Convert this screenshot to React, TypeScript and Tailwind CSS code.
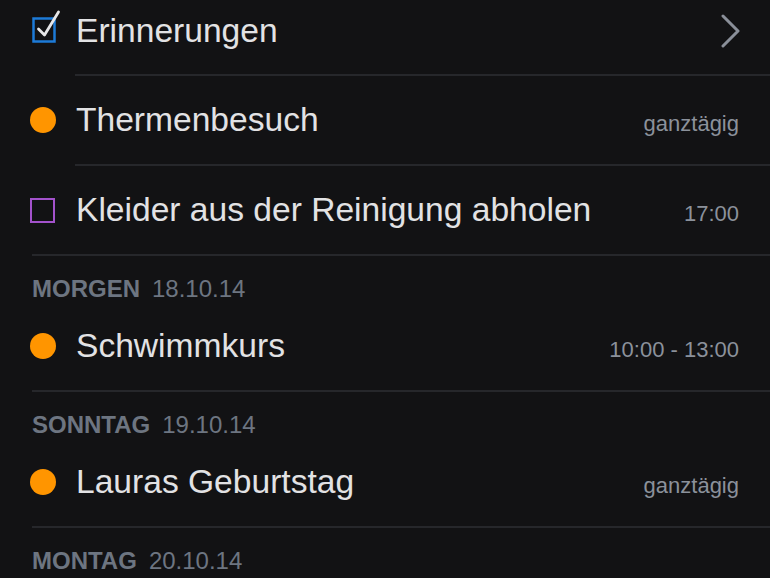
export default function App() {
  const font = { fontFamily: '"Liberation Sans", Arial, sans-serif' }

  const Dot = () => (
    <div className="w-[26px] flex justify-center">
      <div className="w-[26px] h-[26px] rounded-full bg-[#ff9500]" />
    </div>
  )

  const Separator = ({ inset }: { inset?: boolean }) => (
    <div className={inset ? "h-[2px] ml-[75px] bg-[#26272b]" : "h-[2px] ml-[32px] bg-[#26272b]"} />
  )

  const Header = ({ day, date }: { day: string; date: string }) => (
    <div className="h-[46px] flex items-end pl-[32px] text-[24px] leading-[26px] text-[#6d7581]">
      <span className="font-bold">{day}</span>
      <span className="ml-[12px]">{date}</span>
    </div>
  )

  const Row = ({
    icon,
    title,
    right,
    className = "h-[88px]",
  }: {
    icon: React.ReactNode
    title: string
    right?: React.ReactNode
    className?: string
  }) => (
    <div className={`flex items-center pl-[29px] pr-[31px] ${className}`}>
      <div className="w-[27px] flex justify-center">{icon}</div>
      <div className="ml-[20px] flex-1 text-[33.6px] leading-[38px] text-[#e2e2e4]">{title}</div>
      {right}
    </div>
  )

  const Time = ({ children }: { children: React.ReactNode }) => (
    <div className="text-[22px] leading-[26px] text-[#8b919b] mt-[8px]">{children}</div>
  )

  return (
    <div className="w-[770px] h-[578px] overflow-hidden bg-[#121214]" style={font}>
      <Row
        className="h-[74px] pb-[12px]"
        icon={
          <svg width="30" height="34" viewBox="0 0 30 34" className="overflow-visible">
            <rect x="5.5" y="4.5" width="21" height="23" fill="none" stroke="#1d7bd8" strokeWidth="2.5" />
            <polyline
              points="10.5,15 16.5,21 30.5,-2"
              fill="none"
              stroke="#e6e6e8"
              strokeWidth="2.8"
              strokeLinecap="round"
              strokeLinejoin="round"
            />
          </svg>
        }
        title="Erinnerungen"
        right={
          <svg width="22" height="34" viewBox="0 0 22 34" className="mr-[-2px]">
            <polyline
              points="4,2 19,17 4,32"
              fill="none"
              stroke="#8a8f99"
              strokeWidth="3"
              strokeLinecap="round"
              strokeLinejoin="round"
            />
          </svg>
        }
      />
      <Separator inset />
      <Row icon={<Dot />} title="Thermenbesuch" right={<Time>ganztägig</Time>} />
      <Separator inset />
      <Row
        icon={<div className="w-[25px] h-[25px] border-[2.5px] border-[#a352cc]" />}
        title="Kleider aus der Reinigung abholen"
        right={<Time>17:00</Time>}
      />
      <Separator />

      <Header day="MORGEN" date="18.10.14" />
      <Row icon={<Dot />} title="Schwimmkurs" right={<Time>10:00 - 13:00</Time>} />
      <Separator />

      <Header day="SONNTAG" date="19.10.14" />
      <Row icon={<Dot />} title="Lauras Geburtstag" right={<Time>ganztägig</Time>} />
      <Separator />

      <Header day="MONTAG" date="20.10.14" />
    </div>
  )
}
